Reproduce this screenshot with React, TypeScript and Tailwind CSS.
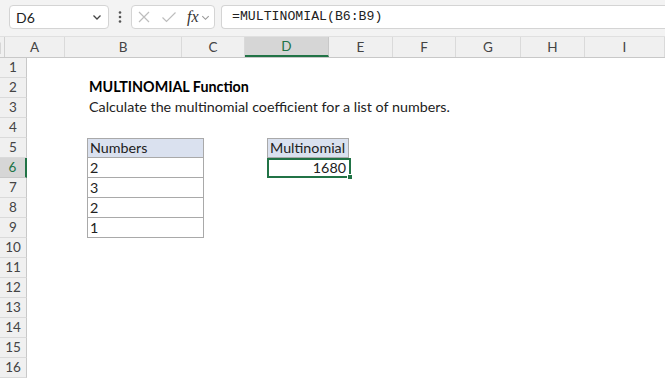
import React from "react";

const cols = [
  { key: "A", w: 60 },
  { key: "B", w: 117 },
  { key: "C", w: 63 },
  { key: "D", w: 84 },
  { key: "E", w: 64 },
  { key: "F", w: 63 },
  { key: "G", w: 65 },
  { key: "H", w: 64 },
  { key: "I", w: 80 },
];

const rows = Array.from({ length: 16 }, (_, i) => i + 1);
const tableVals: Record<number, string> = { 5: "Numbers", 6: "2", 7: "3", 8: "2", 9: "1" };

function Chevron() {
  return (
    <svg width="12" height="12" viewBox="0 0 12 12" fill="none" stroke="#444" strokeWidth="1.3">
      <path d="M2.5 4.5 L6 8 L9.5 4.5" />
    </svg>
  );
}

function FormulaBar() {
  return (
    <div className="h-[37px] bg-[#f3f3f3] flex items-start pt-[5px] pl-[9px] border-b border-[#e0e0e0]">
      <div className="w-[100px] h-[24px] bg-white border border-[#d4d4d4] rounded-[4px] flex items-center justify-between pl-[6px] pr-[5px] text-[14px] text-[#222]">
        <span>D6</span>
        <Chevron />
      </div>
      <div className="w-[22px] h-[24px] flex items-center justify-center">
        <svg width="4" height="14" viewBox="0 0 4 14" fill="#555">
          <circle cx="2" cy="2.5" r="1.3" />
          <circle cx="2" cy="7" r="1.3" />
          <circle cx="2" cy="11.5" r="1.3" />
        </svg>
      </div>
      <div className="w-[84px] h-[24px] bg-white border border-[#d4d4d4] rounded-[4px] flex items-center pl-[5px] gap-[10px]">
        <svg width="14" height="14" viewBox="0 0 14 14" stroke="#bdbdbd" strokeWidth="1.2">
          <path d="M2 2 L12 12 M12 2 L2 12" />
        </svg>
        <svg width="16" height="14" viewBox="0 0 16 14" fill="none" stroke="#bdbdbd" strokeWidth="1.2">
          <path d="M1.5 7.5 L5.5 11.5 L14.5 2.5" />
        </svg>
        <div className="flex items-center gap-[1px]">
          <span className="italic text-[16px] leading-none text-[#333] [font-family:'Liberation_Serif',serif]">fx</span>
          <svg width="11" height="11" viewBox="0 0 12 12" fill="none" stroke="#999" strokeWidth="1.2">
            <path d="M2.5 4.5 L6 8 L9.5 4.5" />
          </svg>
        </div>
      </div>
      <div className="ml-[6px] flex-1 h-[24px] bg-white border border-[#d4d4d4] border-r-0 rounded-l-[4px] flex items-center pl-[10px] text-[13.2px] text-[#222] [font-family:'Liberation_Mono',monospace]">
        =MULTINOMIAL(B6:B9)
      </div>
    </div>
  );
}

function ColumnHeader() {
  return (
    <div className="flex h-[21px] bg-[#f0f0f0] border-b border-[#c8c8c8]">
      <div className="w-[27px] h-full relative border-r border-[#d0d0d0]">
        <div className="absolute right-[3px] bottom-[3px] w-0 h-0 border-l-[12px] border-l-transparent border-b-[12px] border-b-[#d6d6d6]" />
      </div>
      {cols.map((c) => {
        const sel = c.key === "D";
        return (
          <div
            key={c.key}
            style={{ width: c.w }}
            className={
              sel
                ? "h-full flex items-center justify-center bg-[#d6d6d6] text-[#217346] border-b-2 border-[#217346] border-r border-r-[#c8c8c8] shrink-0 text-[13.5px]"
                : "h-full flex items-center justify-center text-[#444] border-r border-[#dadada] shrink-0 text-[13.5px]"
            }
          >
            {c.key}
          </div>
        );
      })}
    </div>
  );
}

function Cell({ col, row }: { col: string; row: number }) {
  if (col === "B") {
    if (row === 2) return <div className="pl-[2px] font-bold text-black whitespace-nowrap">MULTINOMIAL Function</div>;
    if (row === 3)
      return <div className="pl-[2px] text-[#222] whitespace-nowrap">Calculate the multinomial coefficient for a list of numbers.</div>;
    if (tableVals[row]) {
      return (
        <div
          className={
            "h-full pl-[2px] flex items-center border-x border-b border-[#a9a9a9] " +
            (row === 5 ? "bg-[#dae1ef] border-t" : "bg-white")
          }
        >
          {tableVals[row]}
        </div>
      );
    }
  }
  if (col === "D") {
    if (row === 5)
      return <div className="h-full pl-[2px] flex items-center bg-[#dae1ef] border border-[#a9a9a9] mr-[2px]">Multinomial</div>;
    if (row === 6)
      return (
        <div className="h-full relative flex items-center justify-end pr-[3px] border-2 border-[#217346] bg-white">
          1680
          <div className="absolute -right-[4px] -bottom-[4px] w-[6px] h-[6px] bg-[#217346] border border-white" />
        </div>
      );
  }
  return null;
}

export default function App() {
  return (
    <div className="w-[665px] h-[380px] overflow-hidden bg-white [font-family:Lato,'Liberation_Sans',sans-serif]">
      <FormulaBar />
      <ColumnHeader />
      {rows.map((r) => {
        const sel = r === 6;
        return (
          <div key={r} className="flex h-[20px]">
            <div
              className={
                sel
                  ? "w-[27px] shrink-0 h-full flex items-center justify-center bg-[#d6d6d6] text-[#217346] border-r-2 border-[#217346] border-b border-b-[#c8c8c8] text-[13.5px]"
                  : "w-[27px] shrink-0 h-full flex items-center justify-center bg-[#f0f0f0] text-[#444] border-r border-[#c8c8c8] border-b border-b-[#dadada] text-[13.5px]"
              }
            >
              {r}
            </div>
            {cols.map((c) => (
              <div key={c.key} style={{ width: c.w }} className="shrink-0 h-full text-[14.3px] leading-[18px] text-[#222]">
                <Cell col={c.key} row={r} />
              </div>
            ))}
          </div>
        );
      })}
    </div>
  );
}
